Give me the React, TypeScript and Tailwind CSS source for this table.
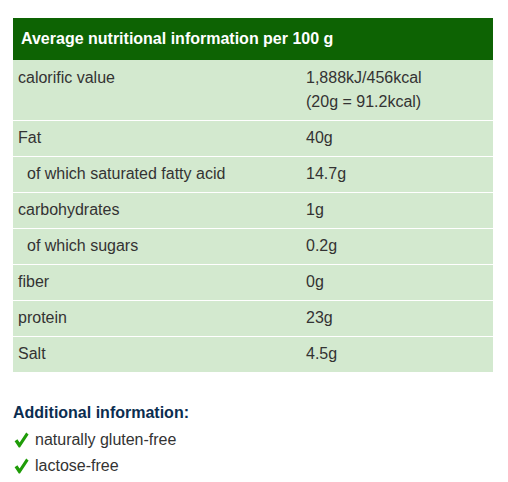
const rows: { label: string; value: string[]; indent?: boolean }[] = [
  { label: "calorific value", value: ["1,888kJ/456kcal", "(20g = 91.2kcal)"] },
  { label: "Fat", value: ["40g"] },
  { label: "of which saturated fatty acid", value: ["14.7g"], indent: true },
  { label: "carbohydrates", value: ["1g"] },
  { label: "of which sugars", value: ["0.2g"], indent: true },
  { label: "fiber", value: ["0g"] },
  { label: "protein", value: ["23g"] },
  { label: "Salt", value: ["4.5g"] },
];

function Check() {
  return (
    <svg width="15" height="16" viewBox="0 0 15 16" className="shrink-0">
      <path
        d="M0.6 9.2 L3.4 7.2 L5.6 10.6 L12.2 0.6 L14.6 2.4 L6 15.4 L4.8 15.4 Z"
        fill="#1f9c08"
      />
    </svg>
  );
}

export default function App() {
  return (
    <div className="min-h-screen bg-white px-[13px] pt-[18px] font-['Liberation_Sans',Arial,sans-serif] text-[16px] text-[#333]">
      <div className="w-[480px]">
        <div className="flex h-[42px] items-center bg-[#0d6303] px-2 text-[16px] font-bold text-white">
          Average nutritional information per 100 g
        </div>
        {rows.map((r, i) => (
          <div
            key={r.label}
            className={`flex bg-[#d3e9cf] leading-6 ${i > 0 ? "border-t border-white pt-[5px] pb-[6px]" : "py-[6px]"}`}
          >
            <div className={`w-[288px] shrink-0 ${r.indent ? "pl-[14px]" : "pl-[5px]"}`}>
              {r.label}
            </div>
            <div className="pl-[5px]">
              {r.value.map((v) => (
                <div key={v}>{v}</div>
              ))}
            </div>
          </div>
        ))}
      </div>

      <div className="mt-[29px] text-[16px] font-bold leading-6 text-[#0b2d50]">
        Additional information:
      </div>
      <div className="mt-[1px] flex h-[27px] items-center gap-[6px] pl-[1px]">
        <Check />
        <span>naturally gluten-free</span>
      </div>
      <div className="flex h-[26px] items-center gap-[6px] pl-[1px]">
        <Check />
        <span>lactose-free</span>
      </div>
    </div>
  );
}
